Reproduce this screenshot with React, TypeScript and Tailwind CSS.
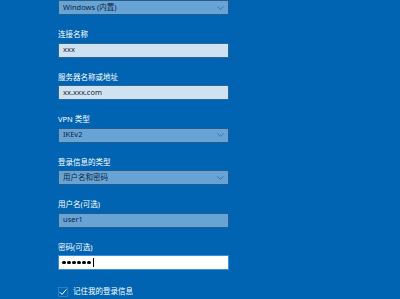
import type { FunctionComponent, ReactNode } from "react";

const font = "font-['Noto_Sans','Noto_Sans_CJK_SC',sans-serif]";

const Chevron = () => (
  <svg width="7" height="4" viewBox="0 0 7 4" className="ml-auto mr-[4px]">
    <path d="M0.5 0.5 L3.5 3.3 L6.5 0.5" fill="none" stroke="#3f6d94" strokeWidth="0.9" />
  </svg>
);

const Select: FunctionComponent<{ value: string }> = ({ value }) => (
  <div className="flex h-[15px] items-center border border-[#245c8c] bg-[#67a3d5] pl-[4px] text-[7.5px] text-[#10263b]">
    <span>{value}</span>
    <Chevron />
  </div>
);

const Field: FunctionComponent<{ label: string; children: ReactNode }> = ({
  label,
  children,
}) => (
  <div className="mt-[13px]">
    <div className="mb-[2.5px] h-[12px] text-[7.5px] leading-[12px] text-white">
      {label}
    </div>
    {children}
  </div>
);

const TextBox: FunctionComponent<{ value: string }> = ({ value }) => (
  <div className="flex h-[15px] items-center border border-[#2d679a] bg-[#cfe2f2] pl-[4px] text-[7.5px] text-[#1c2a36]">
    {value}
  </div>
);

export default function App() {
  return (
    <div className={`h-[299px] w-[400px] overflow-hidden bg-[#0064b2] ${font}`}>
      <div className="w-[229px] pl-[58px]">
        <Select value="Windows (内置)" />
        <Field label="连接名称">
          <TextBox value="xxx" />
        </Field>
        <Field label="服务器名称或地址">
          <TextBox value="xx.xxx.com" />
        </Field>
        <Field label="VPN 类型">
          <Select value="IKEv2" />
        </Field>
        <Field label="登录信息的类型">
          <Select value="用户名和密码" />
        </Field>
        <Field label="用户名(可选)">
          <div className="flex h-[15px] items-center border border-[#245c8c] bg-[#67a3d5] pl-[4px] text-[7.5px] text-[#10263b]">
            user1
          </div>
        </Field>
        <Field label="密码(可选)">
          <div className="flex h-[15px] items-center gap-[1.5px] border border-[#3b8fe0] bg-white pl-[3px]">
            {[0, 1, 2, 3, 4, 5].map((i) => (
              <span key={i} className="h-[3.5px] w-[3.5px] rounded-full bg-black" />
            ))}
            <span className="ml-[1px] h-[9px] w-px bg-black" />
          </div>
        </Field>
        <div className="mt-[16px] flex items-center gap-[5px] text-[7.5px] text-white">
          <svg width="10" height="10" viewBox="0 0 10 10">
            <rect x="0.5" y="0.5" width="9" height="9" fill="#0064b2" stroke="#4a8fcc" strokeWidth="0.6" />
            <path d="M1.8 5.2 L4 7.4 L8.4 2.4" fill="none" stroke="white" strokeWidth="1" />
          </svg>
          <span>记住我的登录信息</span>
        </div>
      </div>
    </div>
  );
}
